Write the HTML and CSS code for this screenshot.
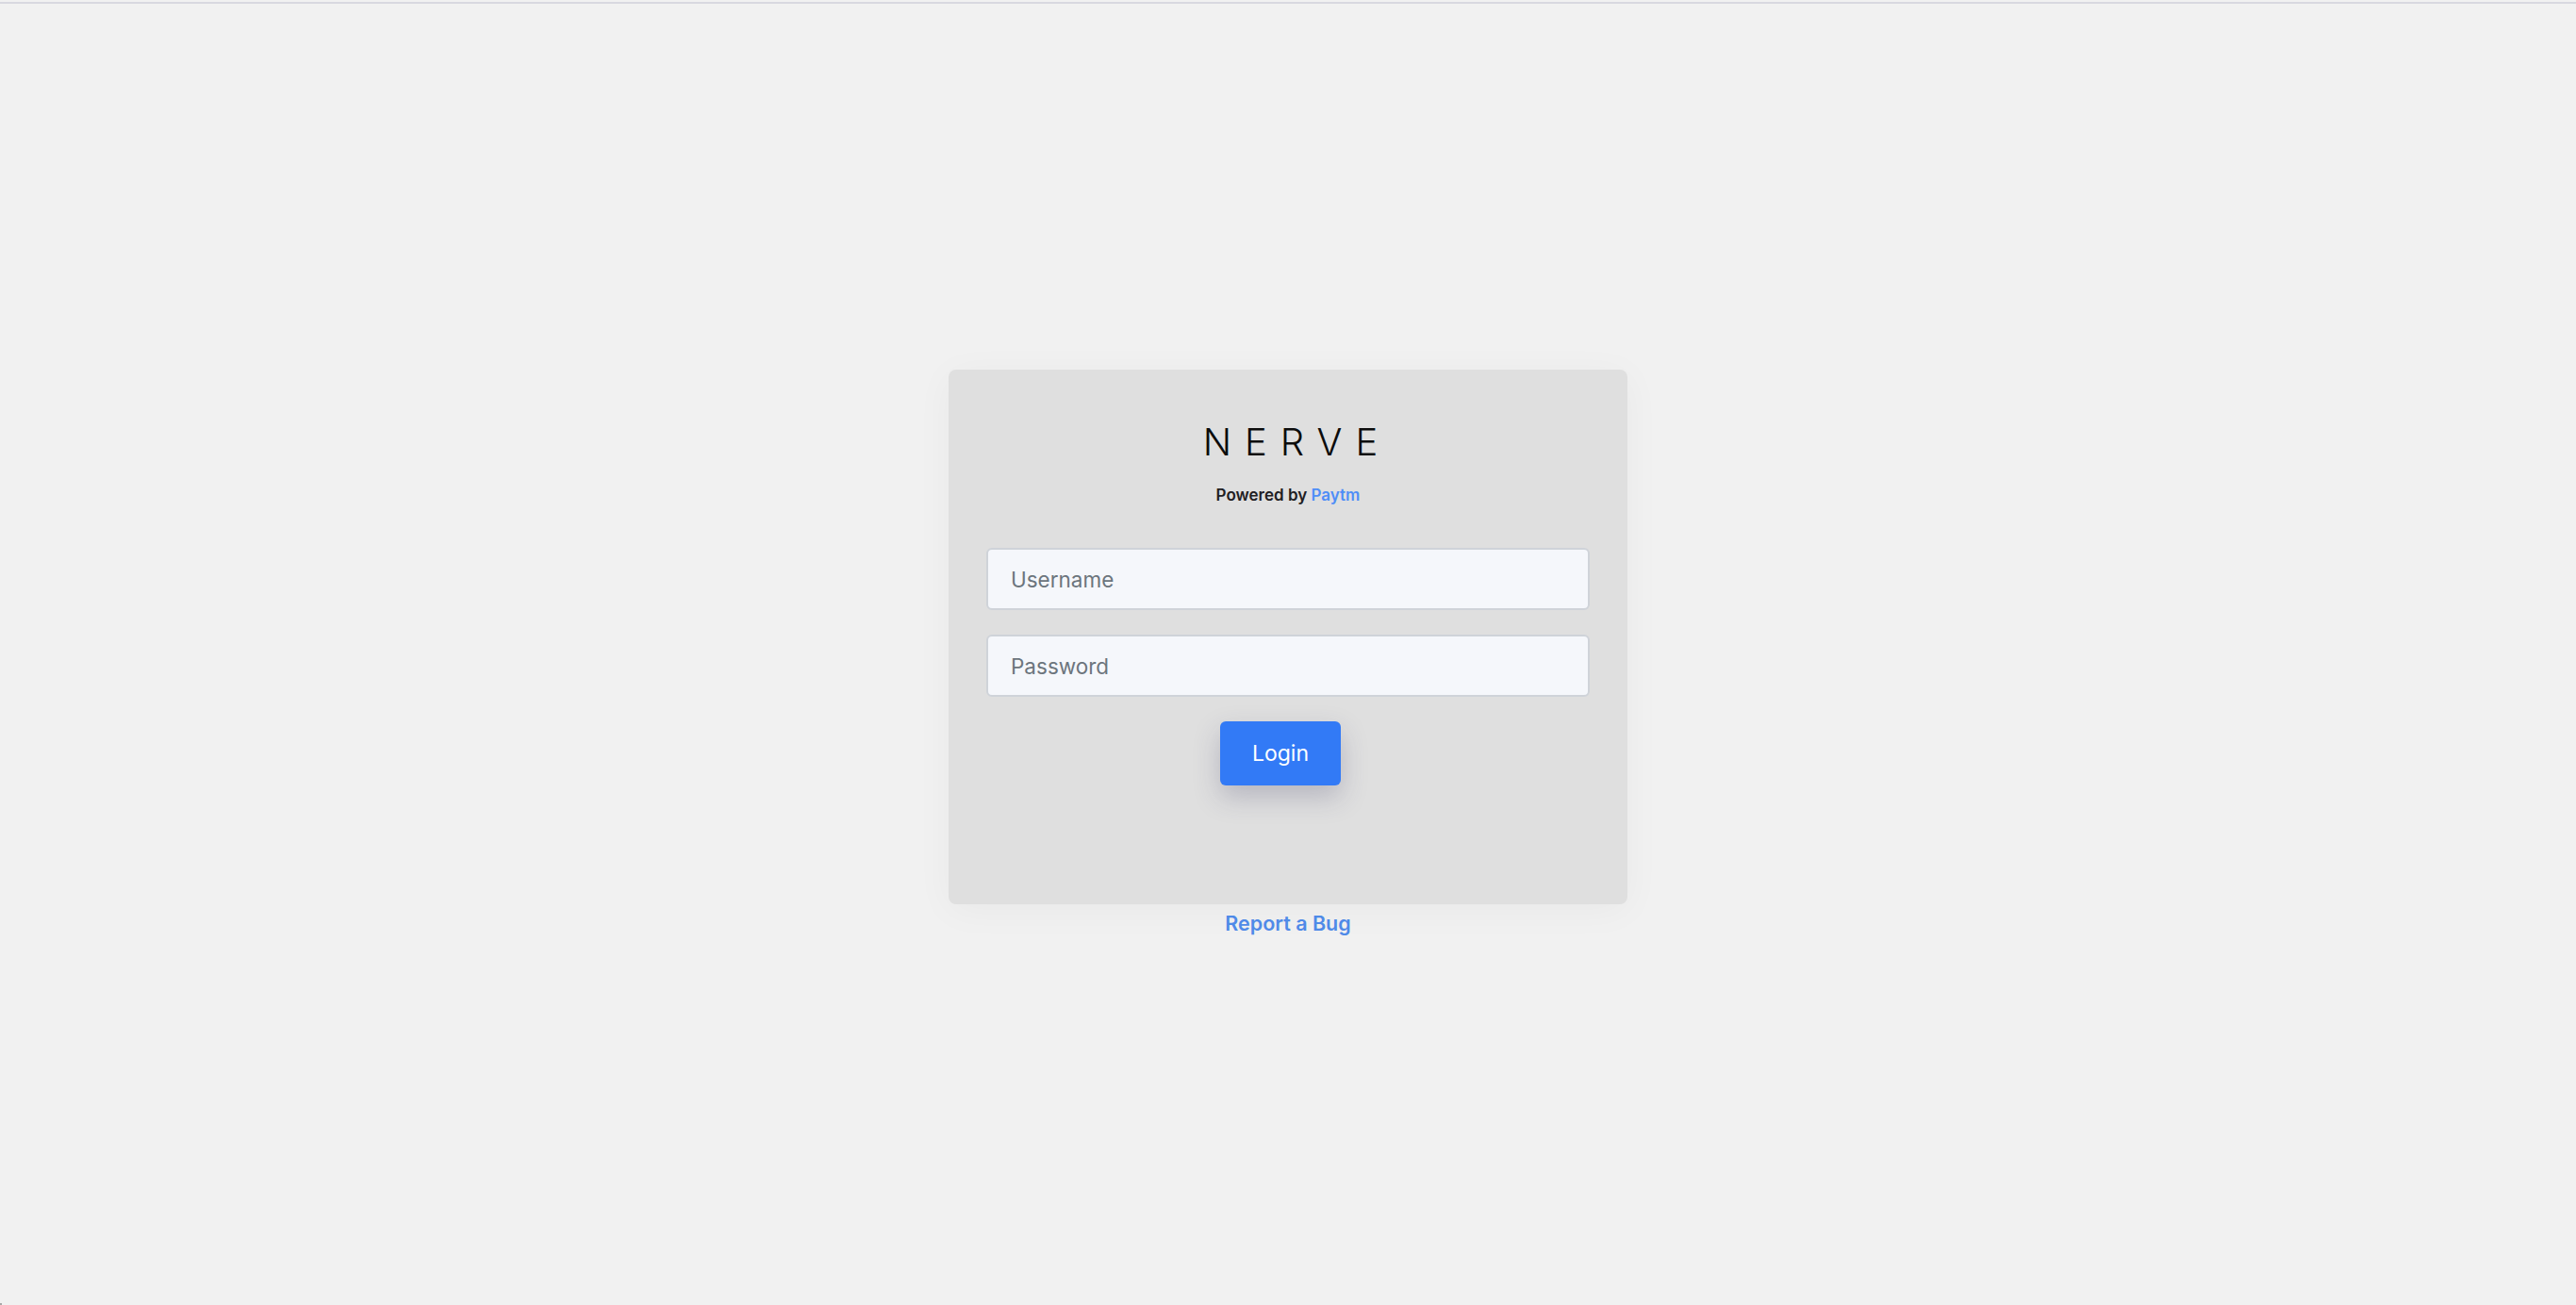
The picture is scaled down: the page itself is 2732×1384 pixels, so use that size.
FILE: index.html
```html
<!DOCTYPE html>
<html lang="en">
<head>
    <meta charset="UTF-8">
    <meta name="viewport" content="width=device-width, initial-scale=1.0">
    <title>Nerve</title>
    <link rel="stylesheet" href="styles.css">
</head>
<body>
    <div class="page">
        <div class="login-card">
            <h1 class="brand">NERVE</h1>
            <p class="powered">Powered by <a href="#">Paytm</a></p>
            <form class="login-form">
                <input type="text" class="field" placeholder="Username" name="username">
                <input type="password" class="field" placeholder="Password" name="password">
                <button type="button" class="login-btn">Login</button>
            </form>
        </div>
        <a href="#" class="report-link">Report a Bug</a>
    </div>
</body>
</html>
```

FILE: styles.css
```css
html {
    background: #f1f1f1;
}
body {
    margin: 2px 0 0;
    font-family: Inter, "Noto Sans", sans-serif;
    border-top: 2px solid #d8d8e0;
}
/* small grey speck in the bottom left corner of the screenshot */
body::after {
    content: "";
    position: fixed;
    left: 0;
    bottom: 0;
    width: 2px;
    height: 2px;
    background: #a8a8a8;
}
.page {
    display: flex;
    flex-direction: column;
    align-items: center;
    padding-top: 388px;
}
.login-card {
    box-sizing: border-box;
    width: 720px;
    height: 567px;
    padding: 62px 40px 0;
    background: #dfdfdf;
    border-radius: 8px;
    box-shadow: 0 6px 40px rgba(0,0,0,0.04);
    text-align: center;
}
.brand {
    margin: 0;
    font-size: 40px;
    line-height: 29px;
    font-weight: 350;
    letter-spacing: 14px;
    text-indent: 19px;
    color: #0c0c0c;
}
.powered {
    margin: 32px 0 0;
    font-size: 17px;
    line-height: 20px;
    font-weight: 600;
    color: #1f2023;
}
.powered a {
    color: #4f8ef7;
    text-decoration: none;
}
.login-form {
    display: flex;
    flex-direction: column;
    align-items: center;
    margin-top: 46px;
}
.field {
    box-sizing: border-box;
    width: 640px;
    height: 66px;
    margin-bottom: 26px;
    padding: 0 24px;
    background: #f5f7fb;
    border: 2px solid #cfd3d9;
    border-radius: 6px;
    font-family: inherit;
    font-size: 22.5px;
    color: #212529;
}
.field::placeholder {
    color: #6c757d;
}
.login-btn {
    width: 128px;
    height: 68px;
    margin-right: 16px;
    background: #327af6;
    border: none;
    border-radius: 6px;
    box-shadow: 0 12px 28px rgba(60,60,100,0.25);
    color: #fff;
    font-family: inherit;
    font-size: 23px;
}
.report-link {
    margin-top: 6px;
    font-size: 21.5px;
    line-height: 28px;
    font-weight: 600;
    color: #4f8ae8;
    text-decoration: none;
}
```
